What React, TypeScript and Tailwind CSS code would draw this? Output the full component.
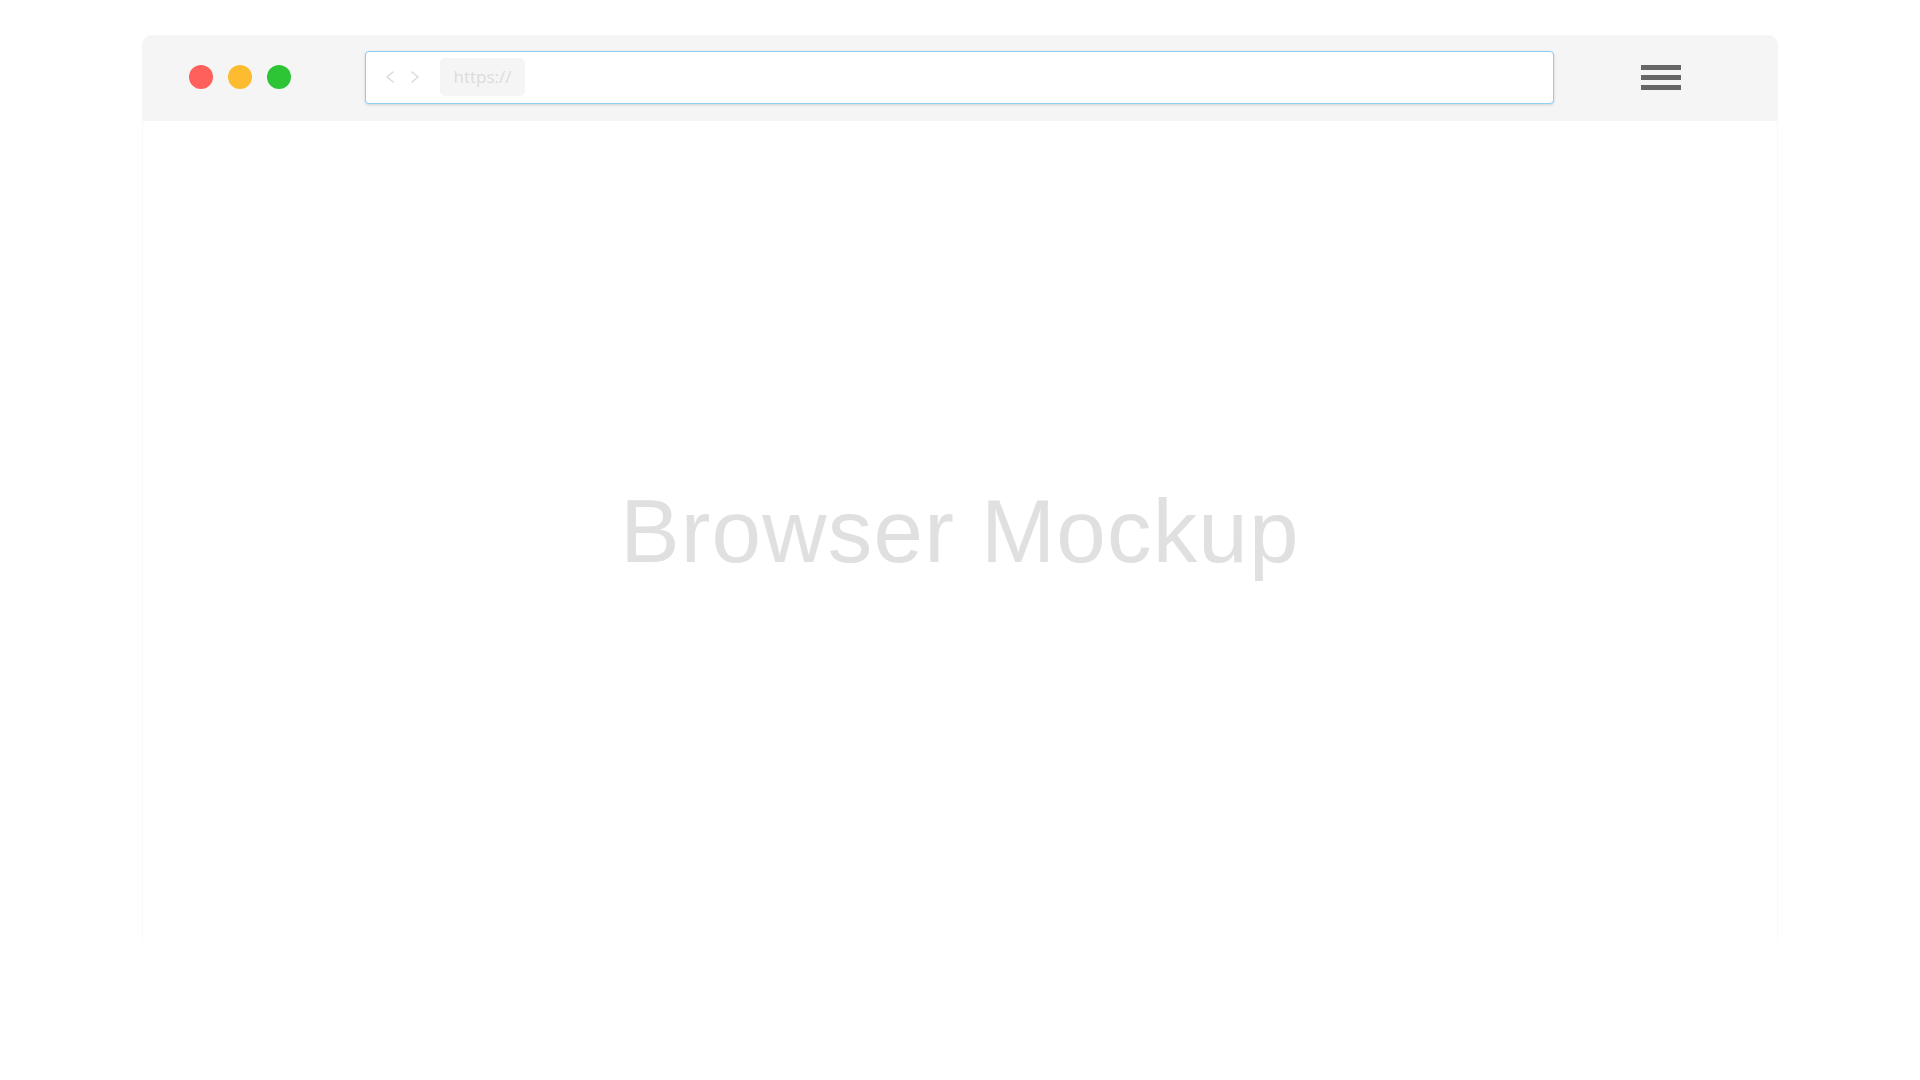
const Chevron = ({ dir }: { dir: "left" | "right" }) => (
  <svg width="10" height="12" viewBox="0 0 10 12" fill="none">
    <polyline
      points={dir === "left" ? "8,1 2,6 8,11" : "2,1 8,6 2,11"}
      stroke="#dcdcdc"
      strokeWidth="1.6"
      strokeLinecap="round"
      strokeLinejoin="round"
    />
  </svg>
);

const App = () => {
  return (
    <div className="min-h-screen bg-white px-[142px] pt-[35px]">
      <div className="w-[1636px]">
        {/* Toolbar */}
        <div className="flex h-[86px] items-center rounded-t-[10px] bg-[#f5f5f5] pb-[2px] pl-[47px]">
          <div className="flex gap-[15px]">
            <span className="h-[24px] w-[24px] rounded-full bg-[#ff605c]" />
            <span className="h-[24px] w-[24px] rounded-full bg-[#fdbc2f]" />
            <span className="h-[24px] w-[24px] rounded-full bg-[#2dc536]" />
          </div>

          <div className="ml-[74px] flex h-[53px] w-[1189px] items-center rounded-[4px] border border-[#8ecdee] bg-white pl-[19px] shadow-[0_1px_3px_rgba(0,0,0,0.15)]">
            <div className="flex items-center gap-[15px]">
              <Chevron dir="left" />
              <Chevron dir="right" />
            </div>
            <div
              className="ml-[20px] flex h-[38px] w-[85px] items-center justify-center rounded-[5px] bg-[#f5f5f5] text-[17px] text-[#dcdcdc]"
              style={{ fontFamily: '"Open Sans", sans-serif' }}
            >
              https://
            </div>
          </div>

          <div className="ml-[87px] flex w-[40px] flex-col gap-[5px]">
            <span className="h-[5px] w-full bg-[#666666]" />
            <span className="h-[5px] w-full bg-[#666666]" />
            <span className="h-[5px] w-full bg-[#666666]" />
          </div>
        </div>

        {/* Page body */}
        <div className="flex h-[820px] items-center justify-center border-x border-[#f9f9f9] bg-white">
          <h1
            className="text-[89px] font-normal leading-none tracking-[1.2px] text-[#e0e0e0]"
            style={{ fontFamily: '"Liberation Sans", Arial, sans-serif' }}
          >
            Browser Mockup
          </h1>
        </div>
      </div>
    </div>
  );
};

export default App;
